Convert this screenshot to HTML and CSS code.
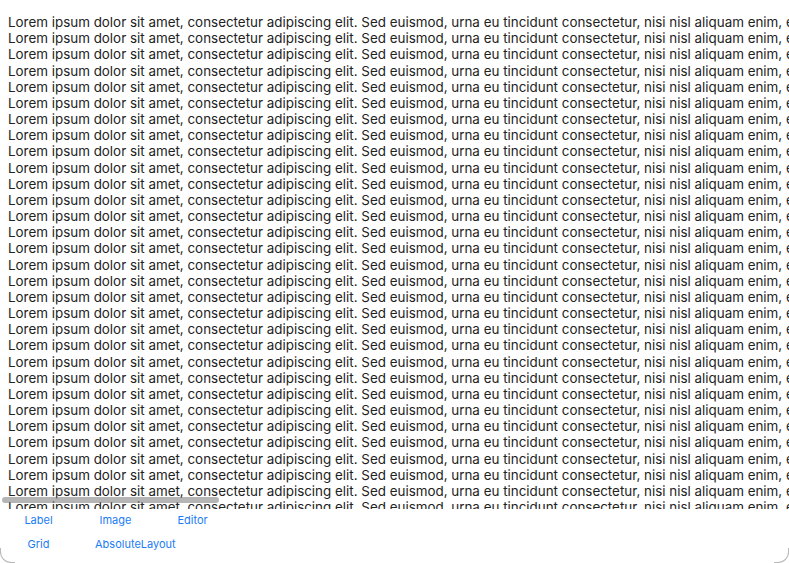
FILE: index.html
```html
<!DOCTYPE html>
<html>
<head>
<meta charset="utf-8">
<link rel="stylesheet" href="styles.css">
</head>
<body>
<div class="window">
  <div class="scroll" id="scroll">
    <div class="content" id="content"></div>
    <div class="scrollbar"></div>
  </div>
  <div class="buttons">
    <button class="btn">Label</button>
    <button class="btn">Image</button>
    <button class="btn">Editor</button>
    <button class="btn">Grid</button>
    <button class="btn">AbsoluteLayout</button>
  </div>
  <div class="corner left"></div>
  <div class="corner right"></div>
</div>
<script src="script.js"></script>
</body>
</html>
```
FILE: script.js
```js
var c = document.getElementById('content');
var s = 'Lorem ipsum dolor sit amet, consectetur adipiscing elit. Sed euismod, urna eu tincidunt consectetur, nisi nisl aliquam enim, eget facilisis quam felis id mauris.';
for (var i = 0; i < 32; i++) {
  var d = document.createElement('div');
  d.className = 'line';
  d.textContent = s;
  c.appendChild(d);
}
```
FILE: styles.css
```css
html, body {
  margin: 0;
  padding: 0;
  background: #ffffff;
}
.window {
  position: relative;
  width: 789px;
  height: 563px;
  overflow: hidden;
  background: #ffffff;
  font-family: "Inter", "Liberation Sans", Arial, sans-serif;
}
.scroll {
  position: relative;
  height: 509px;
  overflow: hidden;
}
.content {
  padding: 14px 0 0 8px;
}
.line {
  font-size: 13.4px;
  line-height: 16.17px;
  color: #222222;
  white-space: nowrap;
}
.scrollbar {
  position: absolute;
  left: 2px;
  top: 497px;
  width: 217px;
  height: 6px;
  border-radius: 3px;
  background: rgba(120,120,120,0.55);
}
.buttons {
  display: flex;
  flex-wrap: wrap;
  width: 240px;
  padding-top: 2px;
  row-gap: 6px;
}
.btn {
  box-sizing: border-box;
  min-width: 77px;
  height: 18px;
  padding: 0 18px;
  border: none;
  background: transparent;
  color: #1a7cf6;
  font-family: "Inter", "Liberation Sans", Arial, sans-serif;
  font-size: 11px;
  text-align: center;
  cursor: pointer;
}
.corner {
  position: absolute;
  bottom: 0;
  width: 14px;
  height: 14px;
  border-bottom: 1px solid #b8b8b8;
}
.corner.left {
  left: 0;
  border-left: 1px solid #b8b8b8;
  border-bottom-left-radius: 11px;
}
.corner.right {
  right: 0;
  border-right: 1px solid #b8b8b8;
  border-bottom-right-radius: 11px;
}
```
